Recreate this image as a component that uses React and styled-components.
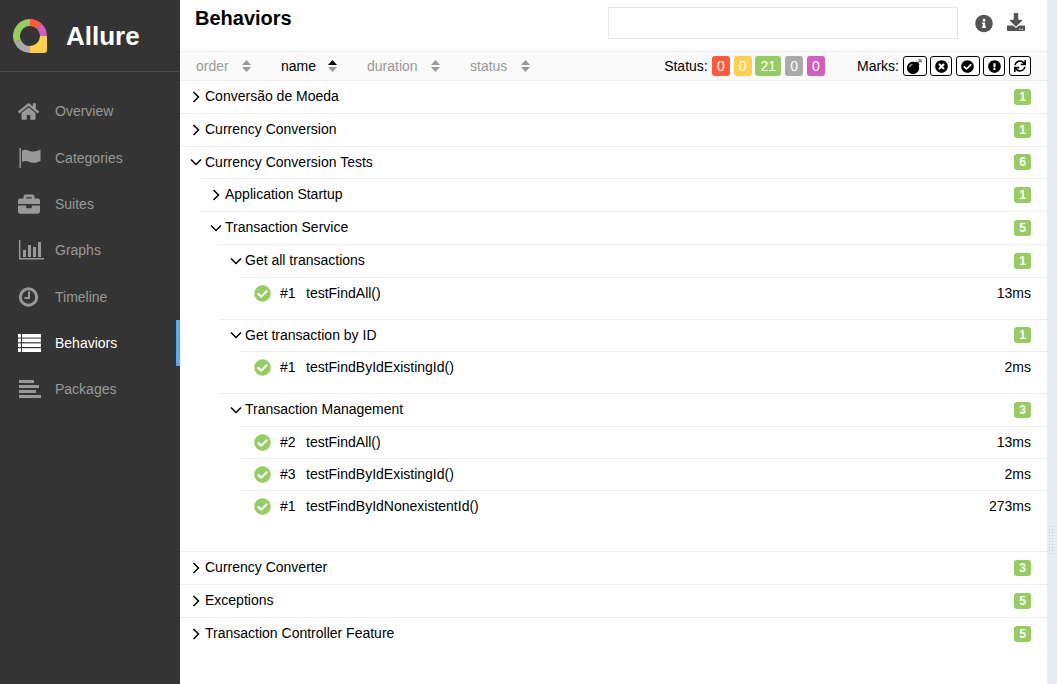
import React from "react";
import styled, { createGlobalStyle } from "styled-components";
import {
  FaBomb,
  FaBriefcase,
  FaCheckCircle,
  FaDownload,
  FaExclamationCircle,
  FaHome,
  FaInfoCircle,
  FaSync,
  FaTimesCircle,
} from "react-icons/fa";

const GREEN = "#97cc64";

const GlobalStyle = createGlobalStyle`
  html, body {
    margin: 0;
    height: 100%;
    overflow: hidden;
  }
  body {
    font-family: "Liberation Sans", Arial, sans-serif;
    font-size: 14px;
    color: #000;
  }
  * {
    box-sizing: border-box;
  }
`;

function Logo() {
  return (
    <LogoSvg viewBox="0 0 34 34">
      <path d="M17 3.5 A13.5 13.5 0 0 0 4.5 22" fill="none" stroke="#97cc64" strokeWidth="7" />
      <path d="M4.5 22 A13.5 13.5 0 0 0 17 30.5" fill="none" stroke="#aaa" strokeWidth="7" />
      <path d="M17 0 H17 A17 17 0 0 1 28.5 4.5 L24 10 A10 10 0 0 0 17 7 Z" fill="#fd5a3e" />
      <path d="M28.5 4.5 A17 17 0 0 1 34 17 H27 A10 10 0 0 0 24 10 Z" fill="#d35ebe" />
      <path d="M34 17 V31 Q34 34 31 34 H17 V27 A10 10 0 0 0 27 17 Z" fill="#ffd050" />
    </LogoSvg>
  );
}

function FlagIcon() {
  return (
    <svg width="24" height="20" viewBox="0 0 24 20" fill="currentColor">
      <rect x="1.5" y="0" width="1.4" height="20" />
      <path d="M4 2.5 C7 1 9 2 11.5 3 C15 4.2 18 3.5 22.5 1.5 V13 C18 15 15 15.5 11.5 14 C9 13 7 12.5 4 14 Z" />
    </svg>
  );
}

function GraphIcon() {
  return (
    <svg width="26" height="20" viewBox="0 0 26 20" fill="currentColor">
      <path d="M1 0 H2.4 V18 H26 V19.4 H1 Z" />
      <rect x="5" y="10" width="3" height="7" />
      <rect x="10" y="5" width="3" height="12" />
      <rect x="15" y="7" width="3" height="10" />
      <rect x="20" y="2" width="3" height="15" />
    </svg>
  );
}

function ClockIcon() {
  return (
    <svg width="21" height="20" viewBox="0 0 21 20" fill="none" stroke="currentColor">
      <circle cx="10.5" cy="10" r="8.2" strokeWidth="3" />
      <path d="M11 4.5 V11 H6.5" strokeWidth="2" />
    </svg>
  );
}

function ListIcon() {
  return (
    <svg width="23" height="18" viewBox="0 0 23 18" fill="currentColor">
      <rect x="0" y="0" width="3" height="3.6" />
      <rect x="4" y="0" width="19" height="3.6" />
      <rect x="0" y="4.6" width="3" height="3.6" />
      <rect x="4" y="4.6" width="19" height="3.6" />
      <rect x="0" y="9.4" width="3" height="3.6" />
      <rect x="4" y="9.4" width="19" height="3.6" />
      <rect x="0" y="14.2" width="3" height="3.8" />
      <rect x="4" y="14.2" width="19" height="3.8" />
    </svg>
  );
}

function PackagesIcon() {
  return (
    <svg width="23" height="18" viewBox="0 0 23 18" fill="currentColor">
      <rect x="1" y="0" width="15" height="3" />
      <rect x="1" y="5" width="20" height="3" />
      <rect x="1" y="10" width="17" height="3" />
      <rect x="1" y="15" width="22" height="3" />
    </svg>
  );
}

function SortIcon() {
  return (
    <svg width="9" height="12" viewBox="0 0 9 12">
      <path d="M4.5 0 L9 5 H0 Z" fill="currentColor" />
      <path d="M4.5 12 L9 7 H0 Z" fill="#999" />
    </svg>
  );
}

function Chevron({ open }) {
  return (
    <ChevronSvg viewBox="0 0 12 12" width="12" height="12">
      <polyline
        points={open ? "1,3.5 6,8.5 11,3.5" : "3.5,1 8.5,6 3.5,11"}
        fill="none"
        stroke="#000"
        strokeWidth="1.5"
      />
    </ChevronSvg>
  );
}

const nav = [
  { label: "Overview", icon: <FaHome size={21} /> },
  { label: "Categories", icon: <FlagIcon /> },
  { label: "Suites", icon: <FaBriefcase size={22} /> },
  { label: "Graphs", icon: <GraphIcon /> },
  { label: "Timeline", icon: <ClockIcon /> },
  { label: "Behaviors", icon: <ListIcon />, active: true },
  { label: "Packages", icon: <PackagesIcon /> },
];

const sorters = [
  { label: "order", width: 85 },
  { label: "name", width: 86, active: true },
  { label: "duration", width: 103 },
  { label: "status", width: 90 },
];

const statuses = [
  { value: 0, color: "#fd5a3e" },
  { value: 0, color: "#ffd050" },
  { value: 21, color: GREEN },
  { value: 0, color: "#aaa" },
  { value: 0, color: "#d35ebe" },
];

const marks = [
  { icon: <FaBomb size={15} />, wide: true },
  { icon: <FaTimesCircle size={13} /> },
  { icon: <FaCheckCircle size={13} />, wide: true },
  { icon: <FaExclamationCircle size={13} /> },
  { icon: <FaSync size={12} /> },
];

const tree = [
  { name: "Conversão de Moeda", count: 1 },
  { name: "Currency Conversion", count: 1 },
  {
    name: "Currency Conversion Tests",
    count: 6,
    children: [
      { name: "Application Startup", count: 1 },
      {
        name: "Transaction Service",
        count: 5,
        children: [
          {
            name: "Get all transactions",
            count: 1,
            tests: [{ order: 1, name: "testFindAll()", time: "13ms" }],
          },
          {
            name: "Get transaction by ID",
            count: 1,
            tests: [{ order: 1, name: "testFindByIdExistingId()", time: "2ms" }],
          },
          {
            name: "Transaction Management",
            count: 3,
            tests: [
              { order: 2, name: "testFindAll()", time: "13ms" },
              { order: 3, name: "testFindByIdExistingId()", time: "2ms" },
              { order: 1, name: "testFindByIdNonexistentId()", time: "273ms" },
            ],
          },
        ],
      },
    ],
  },
  { name: "Currency Converter", count: 3 },
  { name: "Exceptions", count: 5 },
  { name: "Transaction Controller Feature", count: 5 },
];

function TreeNode({ node }) {
  const open = Boolean(node.children || node.tests);
  return (
    <div>
      <GroupRow>
        <Chevron open={open} />
        <GroupName>{node.name}</GroupName>
        <Count>{node.count}</Count>
      </GroupRow>
      {open && (
        <Children $leaf={Boolean(node.tests)}>
          {node.children &&
            node.children.map((child) => <TreeNode key={child.name} node={child} />)}
          {node.tests &&
            node.tests.map((test) => (
              <TestRow key={test.order + test.name}>
                <CheckIcon>
                  <FaCheckCircle size={17} />
                </CheckIcon>
                <TestOrder>#{test.order}</TestOrder>
                <TestName>{test.name}</TestName>
                <span>{test.time}</span>
              </TestRow>
            ))}
        </Children>
      )}
    </div>
  );
}

export default function App() {
  return (
    <Page>
      <GlobalStyle />
      <Sidebar>
        <Brand>
          <Logo />
          <BrandName>Allure</BrandName>
        </Brand>
        <Nav>
          {nav.map((item) => (
            <NavItem key={item.label} $active={item.active}>
              <NavIcon>{item.icon}</NavIcon>
              {item.label}
            </NavItem>
          ))}
        </Nav>
      </Sidebar>
      <Main>
        <Header>
          <Title>Behaviors</Title>
          <Search />
          <HeaderIcon>
            <FaInfoCircle size={19} />
          </HeaderIcon>
          <HeaderIcon $raised>
            <FaDownload size={18} />
          </HeaderIcon>
        </Header>
        <Toolbar>
          <Sorters>
            {sorters.map((s) => (
              <Sorter key={s.label} $active={s.active} $width={s.width}>
                {s.label}
                <SortIcon />
              </Sorter>
            ))}
          </Sorters>
          <ToolLabel>Status:</ToolLabel>
          <Pills>
            {statuses.map((s, i) => (
              <Pill key={i} $color={s.color}>
                {s.value}
              </Pill>
            ))}
          </Pills>
          <MarksLabel>Marks:</MarksLabel>
          <Marks>
            {marks.map((m, i) => (
              <MarkButton key={i} $wide={m.wide}>
                {m.icon}
              </MarkButton>
            ))}
          </Marks>
        </Toolbar>
        <div>
          {tree.map((node) => (
            <TreeNode key={node.name} node={node} />
          ))}
        </div>
      </Main>
      <Gutter>
        <GutterHandle />
      </Gutter>
    </Page>
  );
}

const Page = styled.div`
  display: flex;
  height: 100vh;
`;

const Sidebar = styled.aside`
  width: 180px;
  flex: none;
  background: #343434;
  color: #999;
`;

const Brand = styled.div`
  display: flex;
  align-items: center;
  height: 72px;
  padding-left: 13px;
  border-bottom: 1px solid #4c4c4c;
`;

const LogoSvg = styled.svg`
  width: 34px;
  height: 34px;
`;

const BrandName = styled.div`
  margin: 2px 0 0 19px;
  font-size: 26px;
  font-weight: 700;
  color: #fff;
`;

const Nav = styled.nav`
  padding-top: 16.2px;
`;

const NavItem = styled.div`
  display: flex;
  align-items: center;
  height: 46.3px;
  padding-left: 18px;
  color: ${(p) => (p.$active ? "#fff" : "#999")};
  border-right: 4px solid ${(p) => (p.$active ? "#59a9ee" : "transparent")};
`;

const NavIcon = styled.span`
  display: flex;
  align-items: center;
  justify-content: flex-start;
  width: 37px;
  flex: none;
`;

const Main = styled.main`
  flex: 1;
  min-width: 0;
  background: #fff;
`;

const Header = styled.header`
  display: flex;
  align-items: flex-start;
  height: 51px;
  padding: 7px 21px 0 15px;
`;

const Title = styled.h2`
  flex: 1;
  margin: 0;
  font-size: 20px;
  line-height: 23px;
  font-weight: 700;
`;

const Search = styled.div`
  width: 350px;
  height: 32px;
  border: 1px solid #e3e5e7;
  margin-right: 17px;
`;

const HeaderIcon = styled.span`
  display: flex;
  justify-content: center;
  align-items: center;
  width: 18px;
  height: 32px;
  padding-bottom: ${(p) => (p.$raised ? "2px" : "0")};
  color: #555;
  margin-right: 13px;

  &:last-child {
    width: 20px;
    margin-right: 0;
  }
`;

const Toolbar = styled.div`
  display: flex;
  align-items: center;
  height: 29px;
  padding: 0 16px;
  background: #fafafa;
  border-top: 1px solid #eee;
`;

const Sorters = styled.div`
  display: flex;
  flex: 1;
`;

const Sorter = styled.span`
  display: flex;
  align-items: center;
  justify-content: space-between;
  width: ${(p) => p.$width}px;
  padding-right: 30px;
  color: ${(p) => (p.$active ? "#000" : "#999")};
`;

const ToolLabel = styled.span`
  margin-right: 4px;
`;

const MarksLabel = styled.span`
  margin: 0 4px 0 32px;
`;

const Pills = styled.div`
  display: flex;
  gap: 3.5px;
`;

const Marks = styled.div`
  display: flex;
  gap: 3.75px;
`;

const Pill = styled.span`
  height: 20px;
  padding: 0 5.25px;
  line-height: 20px;
  border-radius: 3px;
  color: #fff;
  background: ${(p) => p.$color};
`;

const MarkButton = styled.span`
  display: flex;
  align-items: center;
  justify-content: center;
  width: ${(p) => (p.$wide ? "23.5px" : "22px")};
  height: 20px;
  color: #000;
  background: #fff;
  border: 1px solid #000;
  border-radius: 3px;
`;

const GroupRow = styled.div`
  display: flex;
  align-items: center;
  height: 32.8px;
  padding: 0 16px 0 9.5px;
  border-top: 1px solid #eee;
`;

const ChevronSvg = styled.svg`
  flex: none;
  margin-right: 3.5px;
`;

const GroupName = styled.span`
  flex: 1;
  padding-bottom: 1.8px;
`;

const Count = styled.span`
  min-width: 17px;
  height: 16px;
  line-height: 16px;
  border-radius: 3px;
  text-align: center;
  font-size: 12px;
  font-weight: 700;
  color: #fff;
  background: ${GREEN};
`;

const Children = styled.div`
  margin-left: 20px;
  padding-bottom: ${(p) => (p.$leaf ? "9.8px" : "9.7px")};
`;

const TestRow = styled.div`
  display: flex;
  align-items: center;
  height: 32px;
  padding: 0 16px 1.4px 14px;
  line-height: 20px;
  border-top: 1px solid #eee;
`;

const CheckIcon = styled.span`
  display: flex;
  width: 26px;
  margin-top: 1px;
  color: ${GREEN};
`;

const TestOrder = styled.span`
  width: 26px;
`;

const TestName = styled.span`
  flex: 1;
`;

const Gutter = styled.div`
  width: 10px;
  flex: none;
  padding-top: 525px;
  background: #e9ecef;
`;

const GutterHandle = styled.div`
  width: 6px;
  height: 30px;
  margin-left: 1px;
  background-image: radial-gradient(#c6cacd 1px, transparent 1px);
  background-size: 3px 3px;
`;
